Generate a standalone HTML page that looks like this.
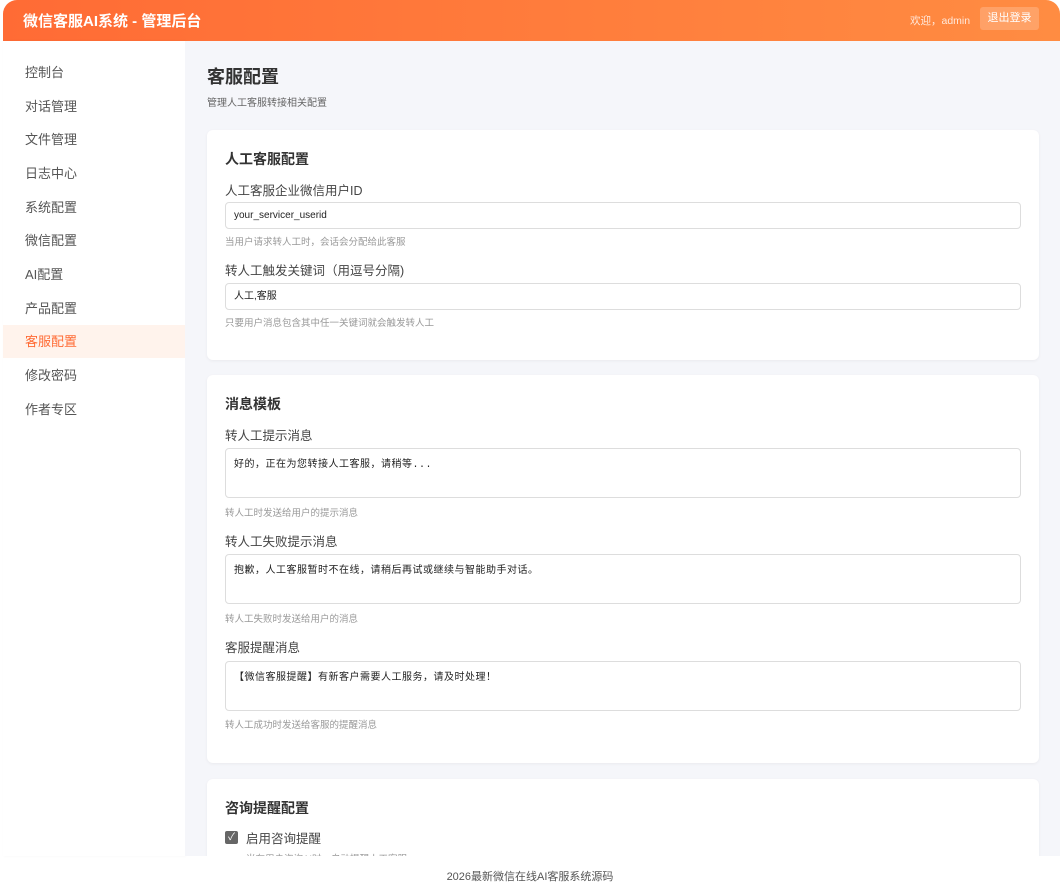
<!DOCTYPE html>
<html><head><meta charset="utf-8"><style>
*{box-sizing:border-box;margin:0;padding:0}
body{width:1060px;height:876px;background:#fff;font-family:"Liberation Sans","Noto Sans CJK SC",sans-serif;position:relative;overflow:hidden;color:#333}
.hdr{position:absolute;left:3px;top:0;width:1057px;height:41px;background:linear-gradient(90deg,#ff6b35,#ff8c42);border-radius:14px 14px 0 0;color:#fff}
.hdr .t{position:absolute;left:20px;top:10px;font-size:15px;font-weight:bold}
.hdr .w{position:absolute;left:907px;top:13px;font-size:10.5px;color:#ffe9dc}
.hdr .b{position:absolute;left:977px;top:7px;width:59px;height:23px;background:rgba(255,255,255,.2);border-radius:3px;font-size:11px;line-height:23px;text-align:center;color:#fff}
.side{position:absolute;left:3px;top:41px;width:182px;height:815px;background:#fff;box-shadow:1px 0 3px rgba(0,0,0,.04)}
.side div{position:absolute;left:0;width:182px;height:33px;line-height:33px;padding-left:22px;font-size:13px;color:#555}
.side .a{background:#fff3ec;color:#ff6b35}
.main{position:absolute;left:185px;top:41px;width:875px;height:815px;background:#f5f6fa;overflow:hidden}
h1{position:absolute;left:22px;top:22px;font-size:18px;color:#333}
.sub{position:absolute;left:22px;top:53px;font-size:10px;color:#666}
.card{position:absolute;left:22px;width:832px;background:#fff;border-radius:6px;box-shadow:0 1px 3px rgba(0,0,0,.05)}
.card h2{position:absolute;left:18px;font-size:14px;color:#333}
.lb{position:absolute;left:18px;font-size:12.5px;color:#444}
.in{position:absolute;left:18px;width:796px;height:27px;border:1px solid #ddd;border-radius:4px;font-size:10px;line-height:25px;padding-left:8px;color:#222}
.ta{position:absolute;left:18px;width:796px;height:50px;border:1px solid #ddd;border-radius:4px;font-size:10px;padding:6px 8px;font-family:"Liberation Mono","Noto Sans CJK SC",monospace;color:#222;letter-spacing:.5px}
.hint{position:absolute;left:18px;font-size:9.5px;color:#999}
.foot{position:absolute;left:0;top:868px;width:1060px;text-align:center;font-size:11px;color:#555}
</style></head><body>
<div class="hdr"><div class="t">微信客服AI系统 - 管理后台</div><div class="w">欢迎，admin</div><div class="b">退出登录</div></div>
<div class="side">
<div style="top:15px">控制台</div><div style="top:49px">对话管理</div><div style="top:82px">文件管理</div><div style="top:116px">日志中心</div><div style="top:150px">系统配置</div><div style="top:183px">微信配置</div><div style="top:217px">AI配置</div><div style="top:251px">产品配置</div><div class="a" style="top:284px">客服配置</div><div style="top:318px">修改密码</div><div style="top:352px">作者专区</div>
</div>
<div class="main">
<h1>客服配置</h1><div class="sub">管理人工客服转接相关配置</div>
<div class="card" style="top:89px;height:230px">
<h2 style="top:19px">人工客服配置</h2>
<div class="lb" style="top:50px">人工客服企业微信用户ID</div>
<div class="in" style="top:72px">your_servicer_userid</div>
<div class="hint" style="top:104px">当用户请求转人工时，会话会分配给此客服</div>
<div class="lb" style="top:130px">转人工触发关键词（用逗号分隔)</div>
<div class="in" style="top:153px">人工,客服</div>
<div class="hint" style="top:185px">只要用户消息包含其中任一关键词就会触发转人工</div>
</div>
<div class="card" style="top:334px;height:388px">
<h2 style="top:19px">消息模板</h2>
<div class="lb" style="top:50px">转人工提示消息</div>
<div class="ta" style="top:73px">好的，正在为您转接人工客服，请稍等...</div>
<div class="hint" style="top:130px">转人工时发送给用户的提示消息</div>
<div class="lb" style="top:156px">转人工失败提示消息</div>
<div class="ta" style="top:179px">抱歉，人工客服暂时不在线，请稍后再试或继续与智能助手对话。</div>
<div class="hint" style="top:236px">转人工失败时发送给用户的消息</div>
<div class="lb" style="top:262px">客服提醒消息</div>
<div class="ta" style="top:286px">【微信客服提醒】有新客户需要人工服务，请及时处理！</div>
<div class="hint" style="top:342px">转人工成功时发送给客服的提醒消息</div>
</div>
<div class="card" style="top:738px;height:100px">
<h2 style="top:19px">咨询提醒配置</h2>
<div style="position:absolute;left:18px;top:52px;width:13px;height:13px;background:#666;border-radius:2px;color:#fff;font-size:10px;line-height:13px;text-align:center">✓</div>
<div class="lb" style="top:49px;left:39px">启用咨询提醒</div>
<div class="hint" style="top:72px;left:39px">当有用户咨询AI时，自动提醒人工客服</div>
</div>
</div>
<div class="foot">2026最新微信在线AI客服系统源码</div>
</body></html>
